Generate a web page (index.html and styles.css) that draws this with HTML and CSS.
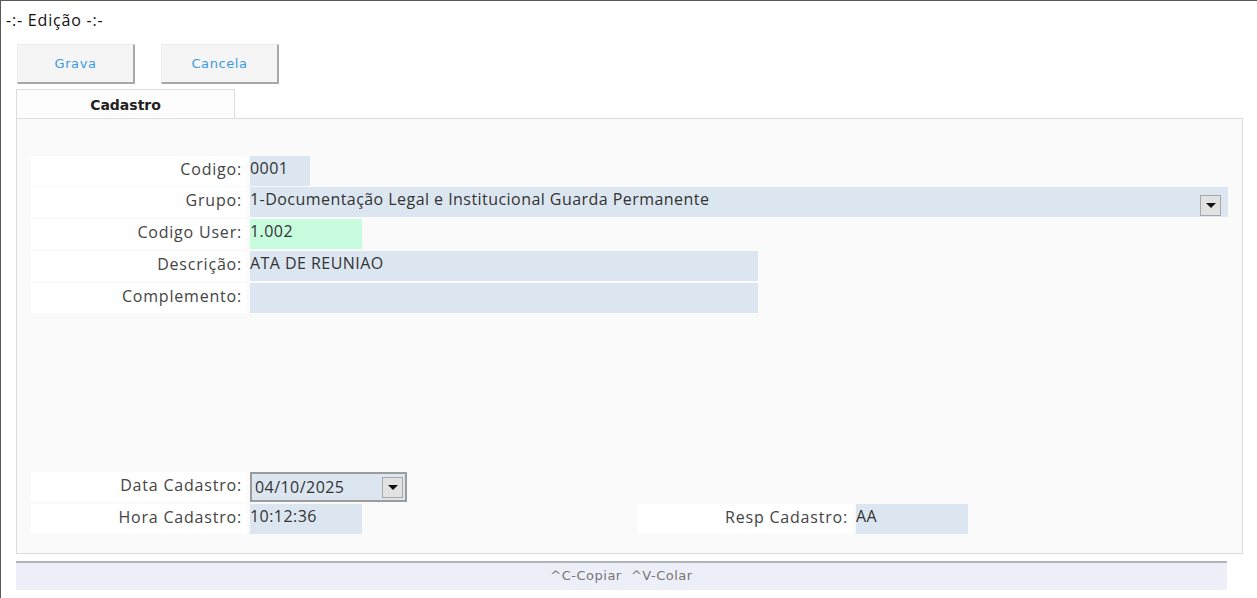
FILE: index.html
```html
<!DOCTYPE html>
<html lang="pt">
<head>
  <meta charset="UTF-8" />
  <title>Edição</title>
  <link rel="stylesheet" href="styles.css">
</head>
<body>
  <div class="window">
    <div class="title">-:- Edição -:-</div>

    <div class="toolbar">
      <button class="tool-btn">Grava</button>
      <button class="tool-btn">Cancela</button>
    </div>

    <div class="tabs">
      <div class="tab">Cadastro</div>
    </div>

    <div class="panel">
      <div class="fields">
        <div class="row">
          <span class="label">Codigo:</span>
          <span class="input w-code">0001</span>
        </div>
        <div class="row row-grupo">
          <span class="label">Grupo:</span>
          <span class="input w-full">1-Documentação Legal e Institucional Guarda Permanente
            <span class="drop"><span class="arrow"></span></span>
          </span>
        </div>
        <div class="row">
          <span class="label">Codigo User:</span>
          <span class="input w-mid green">1.002</span>
        </div>
        <div class="row">
          <span class="label">Descrição:</span>
          <span class="input w-long">ATA DE REUNIAO</span>
        </div>
        <div class="row">
          <span class="label">Complemento:</span>
          <span class="input w-long"></span>
        </div>
      </div>

      <div class="fields bottom">
        <div class="row">
          <span class="label">Data Cadastro:</span>
          <span class="input date">04/10/2025
            <span class="drop"><span class="arrow"></span></span>
          </span>
        </div>
        <div class="row">
          <span class="label">Hora Cadastro:</span>
          <span class="input w-mid">10:12:36</span>
          <span class="label resp">Resp Cadastro:</span>
          <span class="input w-mid">AA</span>
        </div>
      </div>
    </div>

    <div class="status">^C-Copiar&nbsp; ^V-Colar</div>
  </div>
</body>
</html>
```

FILE: styles.css
```css
body {
  margin: 0;
  background-color: #fff;
  font-family: "Open Sans", sans-serif;
}
.window {
  width: 1256px;
  height: 597px;
  border-left: 1px solid #5a5a5a;
  border-top: 1px solid #5a5a5a;
  background-color: #fff;
  overflow: hidden;
}
.title {
  font-size: 16px;
  letter-spacing: 0.8px;
  color: #111;
  padding: 8px 0 0 5px;
  height: 26px;
  box-sizing: border-box;
  line-height: 22px;
}
.toolbar {
  display: flex;
  gap: 26px;
  padding: 17px 0 0 16px;
}
.tool-btn {
  width: 118px;
  height: 40px;
  background-color: #f5f5f5;
  border: none;
  border-top: 1px solid #ececec;
  border-left: 1px solid #ececec;
  border-right: 2px solid #a8a8a8;
  border-bottom: 2px solid #a8a8a8;
  color: #3b9ae6;
  font-family: "DejaVu Sans", sans-serif;
  font-size: 13px;
  letter-spacing: 0.6px;
  padding: 0;
}
.tabs {
  display: flex;
  padding: 5px 0 0 15px;
}
.tab {
  width: 217px;
  height: 28px;
  border: 1px solid #dcdcdc;
  border-bottom: none;
  background-color: #fdfdfd;
  text-align: center;
  font-family: "DejaVu Sans", sans-serif;
  font-weight: bold;
  font-size: 14px;
  line-height: 30px;
  color: #222;
}
.panel {
  margin-left: 15px;
  width: 1227px;
  height: 436px;
  box-sizing: border-box;
  border: 1px solid #dcdcdc;
  background-color: #fafafa;
  display: flex;
  flex-direction: column;
  padding: 37px 0 0 14px;
}
.fields {
  display: flex;
  flex-direction: column;
  gap: 2px;
}
.bottom {
  margin-top: auto;
  margin-bottom: 19px;
}
.row {
  display: flex;
  height: 30px;
  font-size: 16px;
  color: #444;
}
.label {
  width: 211px;
  background-color: #fff;
  text-align: right;
  padding-right: 5px;
  line-height: 27px;
  letter-spacing: 0.8px;
}
.input {
  position: relative;
  margin-left: 3px;
  background-color: #dce6f0;
  color: #333;
  line-height: 24px;
  letter-spacing: 0.45px;
  box-sizing: border-box;
}
.w-code { width: 60px; }
.w-mid { width: 112px; }
.w-long { width: 508px; }
.w-full { width: 978px; }
.green { background-color: #c8fcdf; }
.row-grupo { margin-top: -1px; }
.drop {
  position: absolute;
  top: 8px;
  right: 7px;
  width: 19px;
  height: 19px;
  border: 1px solid #a8a8a8;
  background-color: #e2e2e2;
  display: flex;
  align-items: center;
  justify-content: center;
}
.arrow {
  width: 0;
  height: 0;
  border-left: 5px solid transparent;
  border-right: 5px solid transparent;
  border-top: 5px solid #111;
}
.date {
  width: 157px;
  border: 2px solid #9c9c9c;
  padding-left: 3px;
  line-height: 26px;
}
.date .drop {
  top: 3px;
  right: 2px;
}
.resp {
  margin-left: 275px;
}
.status {
  margin: 7px 0 0 15px;
  width: 1211px;
  height: 29px;
  box-sizing: border-box;
  border-top: 2px solid #b0b4bf;
  background-color: #eceef8;
  text-align: center;
  font-family: "DejaVu Sans", sans-serif;
  font-size: 13px;
  letter-spacing: 0.5px;
  color: #777;
  line-height: 26px;
}
```
